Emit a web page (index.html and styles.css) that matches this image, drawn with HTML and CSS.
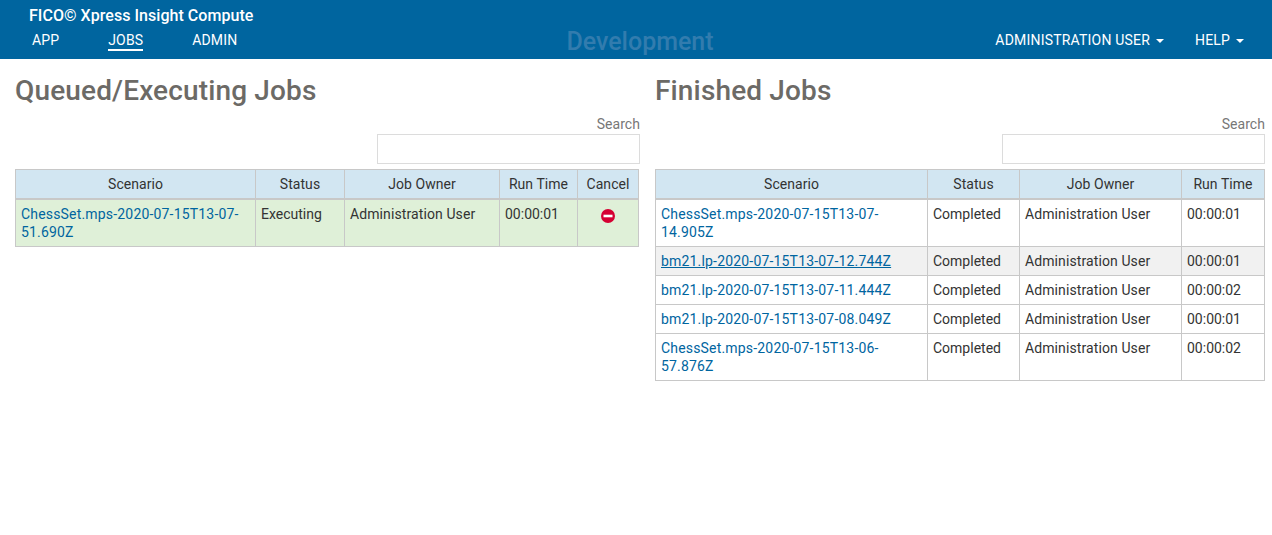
FILE: index.html
```html
<!DOCTYPE html>
<html lang="en">
<head>
<meta charset="utf-8">
<title>FICO Xpress Insight Compute</title>
<link rel="stylesheet" href="styles.css">
</head>
<body>
<header class="topbar">
  <div class="brand">FICO© Xpress Insight Compute</div>
  <nav class="nav">
    <div class="nav-left">
      <a class="nav-link nav-app">APP</a>
      <a class="nav-link nav-jobs active">JOBS</a>
      <a class="nav-link nav-admin">ADMIN</a>
    </div>
    <div class="env">Development</div>
    <div class="nav-right">
      <a class="nav-link caret nav-user">ADMINISTRATION USER</a>
      <a class="nav-link caret nav-help">HELP</a>
    </div>
  </nav>
</header>
<main class="content">
  <section class="panel panel-left">
    <h2 class="heading">Queued/Executing Jobs</h2>
    <div class="search">
      <label class="search-label">Search</label>
      <input class="search-input" type="text">
    </div>
    <table class="jobs jobs-queued">
      <colgroup><col class="q1"><col class="q2"><col class="q3"><col class="q4"><col class="q5"></colgroup>
      <thead><tr><th>Scenario</th><th>Status</th><th>Job Owner</th><th>Run Time</th><th>Cancel</th></tr></thead>
      <tbody>
        <tr class="executing">
          <td><a class="job-link">ChessSet.mps-2020-07-15T13-07-51.690Z</a></td>
          <td>Executing</td><td class="owner">Administration User</td><td>00:00:01</td>
          <td class="cancel"><svg class="cancel-icon" viewBox="0 0 14 14" width="14" height="14"><circle cx="7" cy="7" r="7" fill="#d50032"/><rect x="2.5" y="5.7" width="9" height="2.6" fill="#fff"/></svg></td>
        </tr>
      </tbody>
    </table>
  </section>
  <section class="panel panel-right">
    <h2 class="heading">Finished Jobs</h2>
    <div class="search">
      <label class="search-label">Search</label>
      <input class="search-input" type="text">
    </div>
    <table class="jobs jobs-finished">
      <colgroup><col class="f1"><col class="f2"><col class="f3"><col class="f4"></colgroup>
      <thead><tr><th>Scenario</th><th>Status</th><th>Job Owner</th><th>Run Time</th></tr></thead>
      <tbody>
        <tr><td><a class="job-link">ChessSet.mps-2020-07-15T13-07-14.905Z</a></td><td>Completed</td><td class="owner">Administration User</td><td>00:00:01</td></tr>
        <tr class="hovered"><td><a class="job-link">bm21.lp-2020-07-15T13-07-12.744Z</a></td><td>Completed</td><td class="owner">Administration User</td><td>00:00:01</td></tr>
        <tr><td><a class="job-link">bm21.lp-2020-07-15T13-07-11.444Z</a></td><td>Completed</td><td class="owner">Administration User</td><td>00:00:02</td></tr>
        <tr><td><a class="job-link">bm21.lp-2020-07-15T13-07-08.049Z</a></td><td>Completed</td><td class="owner">Administration User</td><td>00:00:01</td></tr>
        <tr><td><a class="job-link">ChessSet.mps-2020-07-15T13-06-57.876Z</a></td><td>Completed</td><td class="owner">Administration User</td><td>00:00:02</td></tr>
      </tbody>
    </table>
  </section>
</main>
</body>
</html>
```
FILE: styles.css
```css
* { box-sizing: border-box; }
html, body { margin: 0; padding: 0; }
body {
  background: #fff;
  color: #333;
  font-family: Roboto, "Liberation Sans", sans-serif;
  font-size: 14px;
  line-height: 18px;
}
.topbar {
  height: 59px;
  background: #00659f;
  color: #fff;
  position: relative;
}
.brand {
  padding: 6px 0 0 29px;
  font-size: 16px;
  font-weight: 500;
  line-height: 20px;
  letter-spacing: 0.04px;
}
.nav {
  display: flex;
  justify-content: space-between;
  padding: 5px 28px 0 32px;
}
.nav-left { display: flex; }
.nav-right { display: flex; }
.nav-link {
  display: block;
  color: #fff;
  height: 20px;
  line-height: 19px;
  font-size: 14px;
  letter-spacing: 0.15px;
}
.nav-user { letter-spacing: 0.2px; }
.nav-jobs { margin-left: 49px; }
.nav-admin { margin-left: 49px; }
.active { border-bottom: 2px solid #fff; }
.nav-help { margin-left: 31px; }
.caret::after {
  content: "";
  display: inline-block;
  margin-left: 6px;
  vertical-align: 2px;
  border-top: 4px solid #fff;
  border-left: 4px solid transparent;
  border-right: 4px solid transparent;
}
.env {
  position: absolute;
  left: 0;
  right: 0;
  top: 27px;
  padding-left: 8px;
  text-align: center;
  font-size: 25px;
  line-height: 30px;
  font-weight: 500;
  color: #327cae;
  pointer-events: none;
}
.content {
  display: flex;
  padding: 0 7px 0 15px;
  gap: 15px;
}
.panel-left { width: 625px; }
.panel-right { width: 610px; }
.heading {
  margin: 0;
  padding-top: 16px;
  height: 57px;
  font-size: 28px;
  line-height: 32px;
  font-weight: 500;
  letter-spacing: 0.15px;
  color: #6c6a66;
}
.search {
  display: flex;
  flex-direction: column;
  align-items: flex-end;
  height: 53px;
}
.search-label {
  color: #777;
  line-height: 16px;
  height: 18px;
  letter-spacing: 0.05px;
}
.search-input {
  width: 263px;
  height: 30px;
  border: 1px solid #dcdcdc;
  background: #fff;
  padding: 0;
  outline: none;
}
.jobs {
  table-layout: fixed;
  border-collapse: collapse;
}
.jobs-queued { width: 623px; }
.jobs-finished { width: 609px; }
.q1 { width: 240px; }
.q2 { width: 89px; }
.q3 { width: 155px; }
.q4 { width: 78px; }
.q5 { width: 61px; }
.f1 { width: 272px; }
.f2 { width: 92px; }
.f3 { width: 162px; }
.f4 { width: 83px; }
th, td {
  border: 1px solid #c8c8c8;
  padding: 5px;
  text-align: left;
  vertical-align: top;
  font-weight: 400;
}
th {
  background: #d2e6f2;
  text-align: center;
  border-bottom-width: 2px;
  letter-spacing: 0.05px;
}
.owner { letter-spacing: 0.1px; }
.job-link { color: #00659f; letter-spacing: 0.18px; }
.executing td { background: #dff0d8; }
.hovered td { background: #f1f1f1; }
.hovered .job-link { text-decoration: underline; }
.cancel { text-align: center; }
.cancel-icon { display: block; margin: 4px auto 0; }
```
